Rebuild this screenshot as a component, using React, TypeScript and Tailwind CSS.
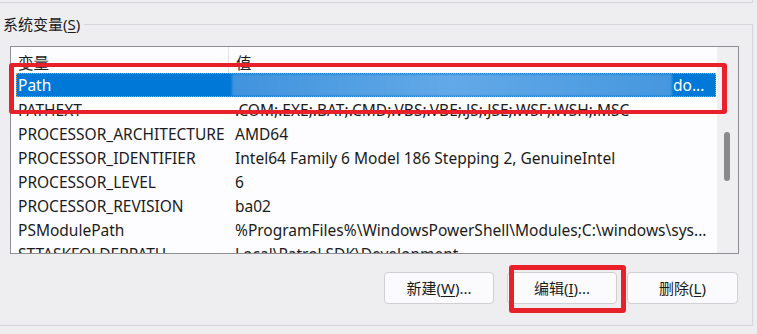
import React from 'react';

const rows = [
  { name: 'PATHEXT', value: '.COM;.EXE;.BAT;.CMD;.VBS;.VBE;.JS;.JSE;.WSF;.WSH;.MSC' },
  { name: 'PROCESSOR_ARCHITECTURE', value: 'AMD64' },
  { name: 'PROCESSOR_IDENTIFIER', value: 'Intel64 Family 6 Model 186 Stepping 2, GenuineIntel' },
  { name: 'PROCESSOR_LEVEL', value: '6' },
  { name: 'PROCESSOR_REVISION', value: 'ba02' },
  { name: 'PSModulePath', value: '%ProgramFiles%\\WindowsPowerShell\\Modules;C:\\windows\\sys...' },
  { name: 'STTASKFOLDERPATH', value: 'Local\\Patrol SDK\\Development' },
];

const Btn = ({ label, hot, tail, className = '' }: { label: string; hot: string; tail: string; className?: string }) => (
  <button className={`h-[32px] rounded-[4px] border border-[#d0d0d4] bg-[#fbfbfd] text-[15px] text-[#1b1b1b] ${className}`}>
    {label}(<span className="underline underline-offset-2">{hot}</span>){tail}
  </button>
);

const App = () => {
  return (
    <div
      className="relative h-[334px] w-[757px] overflow-hidden bg-[#eeedf0] text-[#1b1b1b]"
      style={{ fontFamily: '"Noto Sans", "Noto Sans CJK SC", sans-serif' }}
    >
      <div className="h-[3px] w-[753px] border-b border-r border-[#d6d6da]" />

      <div className="mt-[21px] h-[302px] w-[753px] border-b border-r border-t border-[#d6d6da]">
        <div className="-mt-[11px] w-fit bg-[#eeedf0] pl-[3px] pr-[4px] text-[15px] leading-[20px]">
          系统变量(<span className="underline underline-offset-2">S</span>)
        </div>

        <div className="ml-[10px] mt-[12px] flex h-[208px] w-[729px] border border-[#8e8e94] bg-[#fdfdff]">
          <div className="w-[706px] overflow-hidden">
            <div className="flex h-[26px] text-[15.5px] leading-[26px]">
              <div className="w-[217px] pl-[7px] pt-[3px]">变量</div>
              <div className="w-px bg-[#e3e3e6]" />
              <div className="pl-[7px] pt-[3px]">值</div>
            </div>

            <div className="ml-[5px] flex h-[24px] w-[700px] items-center border border-dotted border-[#e0a050] bg-[#0078d7] pt-[2px] text-[15.5px] text-white">
              <div className="w-[215px] pl-[1px]">Path</div>
              <div className="-mt-[2px] h-[22px] w-[440px] bg-gradient-to-r from-[#3f93dd] via-[#62a9e8] to-[#4597df] blur-[1px]" />
              <div className="pl-[1px]">do...</div>
            </div>

            {rows.map((r) => (
              <div key={r.name} className="ml-[5px] flex h-[24px] w-[700px] items-center whitespace-nowrap pt-[3px] text-[15.5px]">
                <div className="w-[216px] pl-[2px]">{r.name}</div>
                <div className="pl-[3px]">{r.value}</div>
              </div>
            ))}
          </div>
          <div className="w-[21px] bg-[#efeff1] pl-[7px] pt-[85px]">
            <div className="h-[49px] w-[6px] rounded-[3px] bg-[#8a8a8c]" />
          </div>
        </div>

        <div className="ml-[384px] mt-[18px] flex">
          <Btn label="新建" hot="W" tail="..." className="w-[110px]" />
          <Btn label="编辑" hot="I" tail="..." className="ml-[13px] w-[110px]" />
          <Btn label="删除" hot="L" tail="" className="ml-[10px] w-[111px]" />
        </div>
      </div>

      <div className="absolute left-[9px] top-[63px] h-[51px] w-[718px] rounded-[3px] border-x-[5px] border-y-[4px] border-[#e8202a]" />
      <div className="absolute left-[509px] top-[265px] h-[48px] w-[117px] rounded-[3px] border-[5px] border-[#e8202a]" />
    </div>
  );
};

export default App;
